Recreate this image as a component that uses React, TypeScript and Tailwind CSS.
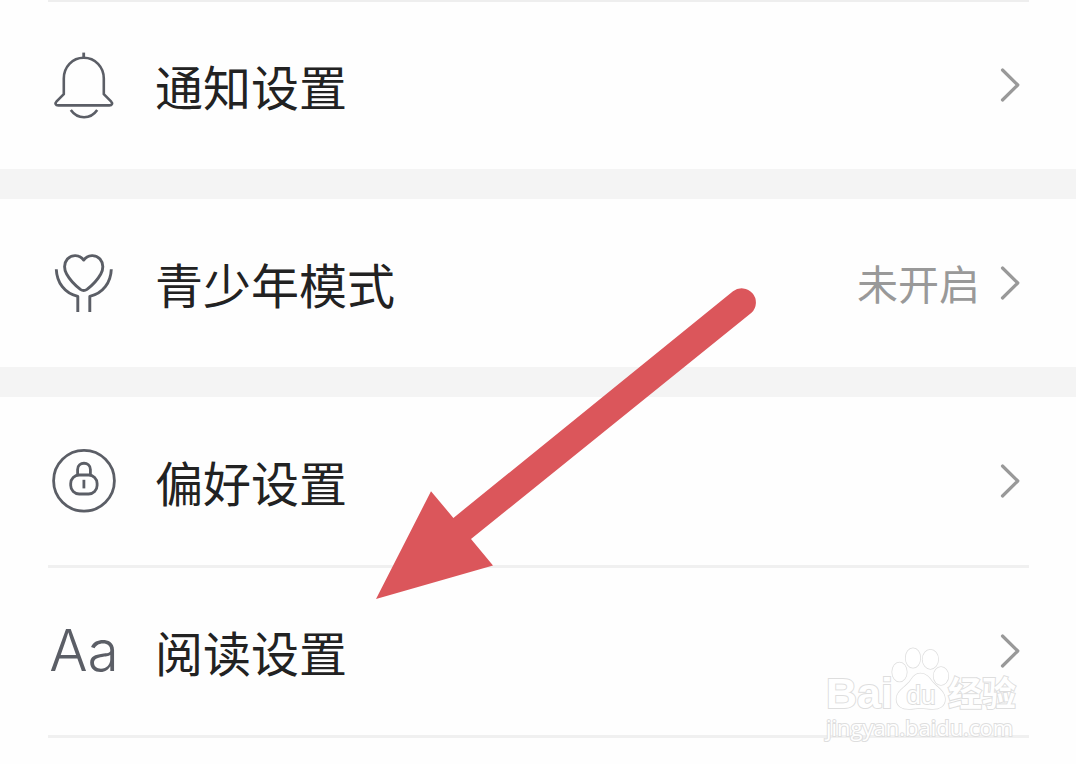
import type { ReactNode } from "react";

function BellIcon() {
  return (
    <svg viewBox="0 0 72 72" className="size-[72px]" fill="none" stroke="#5b5e66" strokeWidth="2.6" strokeLinecap="round" strokeLinejoin="round" aria-hidden="true">
      <path d="M35.7 3.6V9" strokeLinecap="butt" strokeWidth="2.8" />
      <path d="M35.7 8.8C24.2 8.8 15.8 18 15.8 29.5V45.2L8.6 52.4C6.7 54.4 7.6 56.4 10.2 56.4H61.4C64 56.4 64.9 54.4 63 52.4L55.8 45.2V29.5C55.8 18 47.2 8.8 35.7 8.8Z" />
      <path d="M22.8 61C29.6 70.6 42.6 70.6 49.2 61" strokeLinecap="butt" />
    </svg>
  );
}

function HeartHandsIcon() {
  return (
    <svg viewBox="0 0 72 72" className="size-[72px]" fill="none" stroke="#5b5e66" strokeWidth="2.9" strokeLinejoin="round" aria-hidden="true">
      <path d="M35.7 13C31 7.2 23.6 7.4 19.4 12C15.6 16.4 16 22.6 18.6 27C21.6 32.4 27 38.2 32.4 42.4C35 44.2 36.4 44.2 39 42.4C44.4 38.2 49.8 32.4 52.8 27C55.4 22.6 55.8 16.4 52 12C47.8 7.4 40.4 7.2 35.7 13Z" />
      <path d="M8.3 22.2C8.8 35.6 16.6 46.4 29.8 49.4V65" />
      <path d="M63.3 22.2C62.8 35.6 55 46.4 41.8 49.4V65" />
    </svg>
  );
}

function LockIcon() {
  return (
    <svg viewBox="0 0 72 72" className="size-[72px]" fill="none" stroke="#5b5e66" strokeWidth="2.8" aria-hidden="true">
      <circle cx="36" cy="35.7" r="30.4" />
      <rect x="22.7" y="30" width="26.4" height="19" rx="8.5" />
      <path d="M29.6 30V24.4C29.6 16.2 42.4 16.2 42.4 24.4V30" />
      <path d="M35.9 34.8V43.4" />
    </svg>
  );
}

function Chevron() {
  return (
    <svg viewBox="0 0 24 36" className="h-9 w-6 shrink-0" fill="none" stroke="#999999" strokeWidth="3.2" strokeLinecap="round" strokeLinejoin="round" aria-hidden="true">
      <path d="M3.5 3L18.8 18L3.5 33" />
    </svg>
  );
}

function Row({ icon, label, value }: { icon: ReactNode; label: string; value?: string }) {
  return (
    <button type="button" className="flex h-[168px] w-full items-center pl-12 pr-[53px] text-left">
      <span className="flex w-[72px] shrink-0 justify-center">{icon}</span>
      <span className="ml-[35px] flex-1 text-[48px] leading-[72px] text-[#222222]">{label}</span>
      {value && <span className="mr-[19px] pb-[2px] text-[41px] leading-[60px] text-[#999999]">{value}</span>}
      <Chevron />
    </button>
  );
}

function Divider() {
  return <div className="-mb-px ml-12 mr-[47px] h-[3px] bg-[#f0f0f0]" />;
}

function PointerArrow() {
  return (
    <svg viewBox="376 287 382 314" className="pointer-events-none absolute left-[376px] top-[287px] h-[314px] w-[382px]" fill="#db565b" aria-hidden="true">
      <path d="M376 599L431 491.3L453.4 517.9L733 291.3A14.2 14.2 0 0 1 751.5 312.8L471 539L493 565.5Z" />
    </svg>
  );
}

function Watermark() {
  return (
    <div className="pointer-events-none absolute bottom-[23px] right-[56px] w-[194px] text-white [paint-order:stroke_fill] [-webkit-text-stroke:2px_#dedede]">
      <div className="flex items-end whitespace-nowrap">
        <span className="w-[68px] font-['Liberation_Sans',sans-serif] text-[43px] font-bold leading-[40px]">Bai</span>
        <div className="relative h-[66px] w-[54px]">
          <svg viewBox="0 0 56 66" className="h-[66px] w-[56px] overflow-visible" fill="#ffffff" stroke="#dedede" strokeWidth="1.5" aria-hidden="true">
            <ellipse cx="5.5" cy="25" rx="7.3" ry="9.5" />
            <ellipse cx="19" cy="11" rx="7.3" ry="9.8" />
            <ellipse cx="36.4" cy="12.3" rx="7.8" ry="9.6" />
            <ellipse cx="47" cy="29" rx="7.4" ry="9" />
            <path d="M26.5 26.5C20.5 26.5 18.5 31 15.5 35C11.5 40 2.5 44 2.5 52C2.5 59 8 62 15 62C20 62 22 61 26.5 61C31 61 33.5 62 38.5 62C45.5 62 51 59 51 52C51 44 42.5 40 38.5 35C35.5 31 32.5 26.5 26.5 26.5Z" />
          </svg>
          <span className="absolute inset-x-0 bottom-1 text-center font-['Liberation_Sans',sans-serif] text-[26px] leading-[28px]">du</span>
        </div>
        <span className="text-[34px] font-bold leading-[42px]">经验</span>
      </div>
      <div className="whitespace-nowrap font-['Open_Sans',sans-serif] text-[22px] leading-[28px]">jingyan.baidu.com</div>
    </div>
  );
}

export default function App() {
  return (
    <main className="relative min-h-screen overflow-hidden bg-[#fefefe] font-['Noto_Sans_CJK_SC',sans-serif]">
      <section>
        <div className="-mb-px ml-12 mr-[47px] h-[2px] bg-[#eeeeee]" />
        <Row icon={<BellIcon />} label="通知设置" />
      </section>
      <section className="border-t-[30px] border-[#f4f4f4]">
        <Row icon={<HeartHandsIcon />} label="青少年模式" value="未开启" />
      </section>
      <section className="border-t-[30px] border-[#f4f4f4]">
        <Row icon={<LockIcon />} label="偏好设置" />
        <Divider />
        <Row
          icon={<span className="font-['Inter',sans-serif] text-[57px] font-light leading-[72px] text-[#5b5e66]">Aa</span>}
          label="阅读设置"
        />
        <Divider />
      </section>
      <PointerArrow />
      <Watermark />
    </main>
  );
}
